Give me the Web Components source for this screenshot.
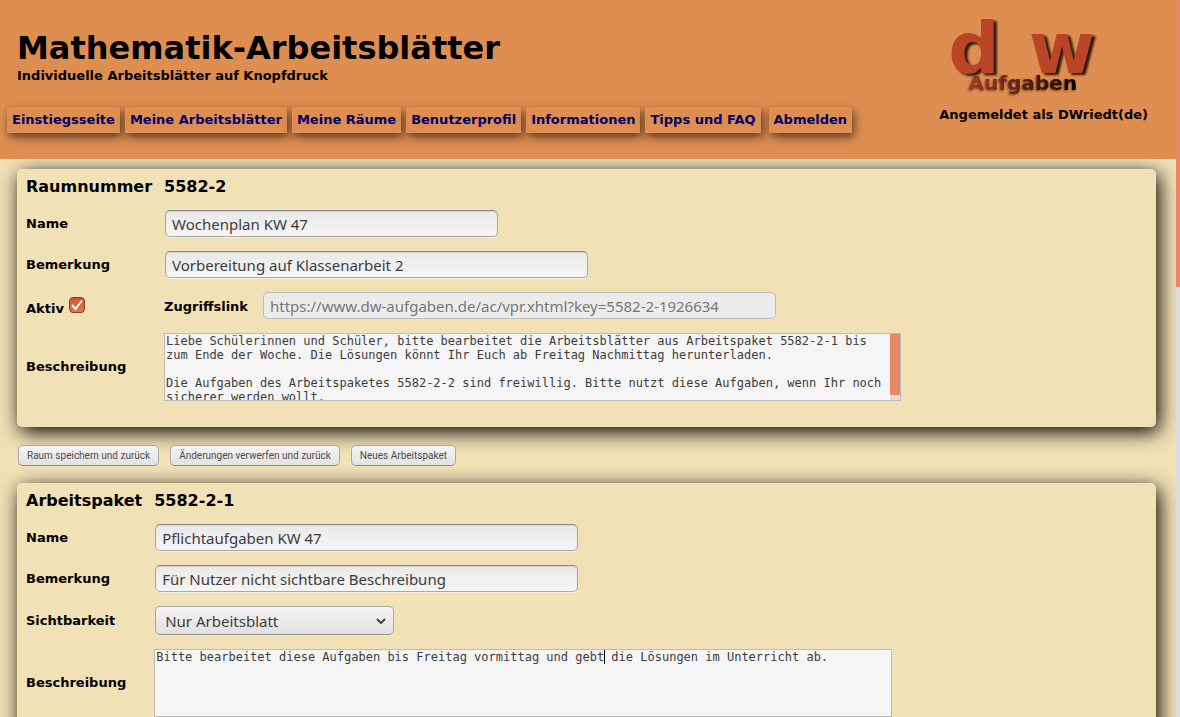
<!DOCTYPE html>
<html lang="de">
<head>
<meta charset="utf-8">
<meta name="viewport" content="width=device-width, initial-scale=1">
<title>Mathematik-Arbeitsblätter</title>
<style>
body {
	margin: 0;
	background-color: #f0e1b6;
	font-family: "DejaVu Sans", Verdana, sans-serif;
	font-size: 13px;
	font-weight: 700;
	line-height: 16px;
	color: black;
	--orange: #de8e51;
	--sand: #f0e1b6;
	--bar: #e58964;
	--ui-font: "Noto Sans", "Open Sans", sans-serif;
}
</style>
</head>
<body>

<page-frame>
	<page-header slot="header" user="DWriedt(de)">
		<nav-link href="#start">Einstiegsseite</nav-link>
		<nav-link href="#blaetter">Meine Arbeitsblätter</nav-link>
		<nav-link href="#raeume">Meine Räume</nav-link>
		<nav-link href="#profil">Benutzerprofil</nav-link>
		<nav-link href="#info">Informationen</nav-link>
		<nav-link href="#faq">Tipps und FAQ</nav-link>
		<nav-link href="#abmelden" apart>Abmelden</nav-link>
	</page-header>

	<form-panel label="Raumnummer" number="5582-2">
		<text-field label="Name" value="Wochenplan KW 47" size="small"></text-field>
		<text-field label="Bemerkung" value="Vorbereitung auf Klassenarbeit 2"></text-field>
		<access-field link="https://www.dw-aufgaben.de/ac/vpr.xhtml?key=5582-2-1926634"></access-field>
		<area-field label="Beschreibung" scroll>Liebe Schülerinnen und Schüler, bitte bearbeitet die Arbeitsblätter aus Arbeitspaket 5582-2-1 bis zum Ende der Woche. Die Lösungen könnt Ihr Euch ab Freitag Nachmittag herunterladen.

Die Aufgaben des Arbeitspaketes 5582-2-2 sind freiwillig. Bitte nutzt diese Aufgaben, wenn Ihr noch sicherer werden wollt.</area-field>
	</form-panel>

	<button-bar>
		<push-button>Raum speichern und zurück</push-button>
		<push-button>Änderungen verwerfen und zurück</push-button>
		<push-button>Neues Arbeitspaket</push-button>
	</button-bar>

	<form-panel label="Arbeitspaket" number="5582-2-1">
		<text-field label="Name" value="Pflichtaufgaben KW 47"></text-field>
		<text-field label="Bemerkung" value="Für Nutzer nicht sichtbare Beschreibung"></text-field>
		<select-field label="Sichtbarkeit" options="Nur Arbeitsblatt"></select-field>
		<area-field label="Beschreibung" caret="62">Bitte bearbeitet diese Aufgaben bis Freitag vormittag und gebt die Lösungen im Unterricht ab.</area-field>
	</form-panel>
</page-frame>

<script>
//Shared look of the form controls
const controlStyle = `
:host { display: contents; }
* { box-sizing: border-box; }
label { align-self: center; }
input[type=text] {
	display: block;
	width: 423px;
	max-width: 100%;
	height: 27px;
	margin: 0 0 0 1px;
	padding: 0 6px;
	border: 1px solid #a9a9a9;
	border-top-color: #8a8a8a;
	border-radius: 5px;
	background: linear-gradient(#e9e9e9, #f5f5f5);
	box-shadow: inset 0 1px 1px #d2d2d2, 0 1px 0 #f8f0da;
	color: #3c3c3c;
	font: 400 15px/20px var(--ui-font);
}
input.small { width: 333px; }
input:disabled {
	background: #ebebeb;
	border-color: #bdbdbd;
	box-shadow: none;
	color: #777;
}
`;

class BaseElement extends HTMLElement {

	constructor() {
		super();
		this.attachShadow({ mode: "open" });
	}

	connectedCallback() {
		this.shadowRoot.innerHTML = this.render();
	}

	attr(name) {
		return this.getAttribute(name) || "";
	}
}

//Scrolling page with its slim scroll rail
class PageFrame extends BaseElement {
	render() {
		return `
<style>
:host { display: grid; grid-template-columns: minmax(0, 1fr) 4px; height: 100vh; }
.scroller { overflow-y: auto; scrollbar-width: none; }
header { position: relative; z-index: 1; }
main { display: flex; flex-direction: column; padding: 10px 20px 20px 17px; }
.rail { background: #dcdcdc; }
.thumb { height: 40%; background: var(--bar); }
</style>
<div class="scroller">
	<header><slot name="header"></slot></header>
	<main><slot></slot></main>
</div>
<div class="rail"><div class="thumb"></div></div>`;
	}
}

class PageHeader extends BaseElement {
	render() {
		return `
<style>
:host { display: flex; justify-content: space-between; background: var(--orange); }
.left { padding: 28px 0 26px 7px; }
h1 { margin: 0 10px; font-size: 32px; line-height: 40px; }
p { margin: 0 10px; }
nav { display: flex; flex-wrap: wrap; gap: 5px; margin-top: 23px; }
.right { display: flex; flex-direction: column; align-items: flex-end; gap: 13px; padding: 18px 28px 0 0; }
</style>
<div class="left">
	<h1>Mathematik-Arbeitsblätter</h1>
	<p>Individuelle Arbeitsblätter auf Knopfdruck</p>
	<nav><slot></slot></nav>
</div>
<div class="right">
	<dw-logo></dw-logo>
	<span>Angemeldet als ${this.attr("user")}</span>
</div>`;
	}
}

class DwLogo extends BaseElement {
	render() {
		return `
<style>
:host { display: block; }
svg { display: block; }
text { font-family: "DejaVu Sans", sans-serif; font-weight: 700; text-anchor: middle; }
.big { font-size: 72px; fill: #b94426; filter: drop-shadow(3px 2px 1px #2a1408); }
.word { font-size: 20px; fill: url(#fade); filter: drop-shadow(-1px 1px 1px #7a3a1c); }
</style>
<svg width="248" height="76" viewBox="0 0 248 76" overflow="visible" role="img" aria-label="dw Aufgaben">
	<defs>
		<linearGradient id="fade" x1="0" x2="1">
			<stop offset="0" stop-color="#a33c22"/>
			<stop offset="0.8" stop-color="#2a1208"/>
			<stop offset="1" stop-color="#000"/>
		</linearGradient>
	</defs>
	<text class="word" x="123" y="72">Aufgaben</text>
	<text class="big" x="74" y="55">d</text>
	<text class="big" x="162" y="55">w</text>
</svg>`;
	}
}

class NavLink extends BaseElement {
	render() {
		return `
<style>
:host { display: block; }
:host([apart]) { margin-left: 3px; }
a {
	display: block;
	padding: 5px;
	background: var(--orange);
	box-shadow: 2px 4px 10px rgba(0, 0, 0, 0.6);
	color: #000066;
	text-decoration: none;
}
</style>
<a href="${this.attr("href")}"><slot></slot></a>`;
	}
}

//The fields lay themselves out in the two columns of this grid
class FormPanel extends BaseElement {
	render() {
		return `
<style>
:host {
	display: grid;
	grid-template-columns: max-content minmax(0, 1fr);
	gap: 14px 12px;
	padding: 9px 9px 26px;
	border-radius: 5px;
	background: var(--sand);
	box-shadow: 3px 5px 20px black;
}
h2 { margin: 0; font-size: 16px; line-height: 18px; }
</style>
<h2>${this.attr("label")}</h2>
<h2>${this.attr("number")}</h2>
<slot></slot>`;
	}
}

class TextField extends BaseElement {
	render() {
		return `
<style>${controlStyle}</style>
<label for="field">${this.attr("label")}</label>
<input id="field" type="text" class="${this.attr("size")}" value="${this.attr("value")}">`;
	}
}

class AccessField extends BaseElement {
	render() {
		return `
<style>
${controlStyle}
.active { display: flex; gap: 5px; padding-bottom: 2px; }
.active label { align-self: flex-end; }
.check { display: grid; align-self: flex-start; padding-top: 5px; }
.check > * { grid-area: 1 / 1; }
input[type=checkbox] {
	appearance: none;
	width: 16px;
	height: 16px;
	margin: 0;
	border: 1px solid #8f3d20;
	border-radius: 4px;
}
input:checked { background: linear-gradient(#cf5428, #e07850); }
svg { pointer-events: none; }
.link { display: flex; gap: 14px; }
.link label { padding-top: 2px; }
.link input { width: 513px; }
</style>
<div class="active">
	<label for="active">Aktiv</label>
	<span class="check">
		<input id="active" type="checkbox" checked>
		<svg width="16" height="16" viewBox="0 0 16 16" fill="none" stroke="#fff" stroke-width="2"><path d="M3 8l3.5 4L13 3.5"/></svg>
	</span>
</div>
<div class="link">
	<label for="link">Zugriffslink</label>
	<input id="link" type="text" value="${this.attr("link")}" disabled>
</div>`;
	}
}

class SelectField extends BaseElement {
	render() {
		let options = this.attr("options").split(",").map((o) => `<option>${o}</option>`).join("");
		return `
<style>
${controlStyle}
.box { display: grid; align-items: center; width: 239px; margin-left: 1px; }
.box > * { grid-area: 1 / 1; }
select {
	appearance: none;
	height: 29px;
	padding: 0 9px;
	border: 1px solid #a9a9a9;
	border-bottom-color: #8a8a8a;
	border-radius: 5px;
	background: linear-gradient(#f4f4f4, #e2e0e0);
	box-shadow: 0 1px 0 #f8f0da;
	color: #3c3c3c;
	font: 400 15px/20px var(--ui-font);
}
svg { justify-self: end; margin-right: 8px; pointer-events: none; }
</style>
<label for="field">${this.attr("label")}</label>
<div class="box">
	<select id="field">${options}</select>
	<svg width="10" height="6" viewBox="0 0 10 6" fill="none" stroke="#444" stroke-width="2"><path d="M1 1l4 4 4-4"/></svg>
</div>`;
	}
}

class AreaField extends BaseElement {
	render() {
		let rail = this.hasAttribute("scroll") ? `<div class="rail"><div class="thumb"></div></div>` : "";
		let caret = this.hasAttribute("caret") ? `<i class="caret"></i>` : "";
		return `
<style>
${controlStyle}
.box {
	position: relative;
	display: flex;
	width: 738px;
	max-width: 100%;
	height: 68px;
	border: 1px solid #bbb;
	background: #f5f5f5;
	font: 400 12px/14px "DejaVu Sans Mono", monospace;
}
:host([scroll]) .box { width: 737px; }
textarea {
	flex: 1;
	min-width: 0;
	padding: 0 1px;
	border: 0;
	outline: 0;
	background: none;
	resize: none;
	scrollbar-width: none;
	color: #3c3c3c;
	font: inherit;
}
.rail { width: 10px; background: #dcdcdc; }
.thumb { height: 92%; background: var(--bar); border-radius: 1px; }
.caret {
	position: absolute;
	top: 0;
	left: calc(${this.attr("caret") || 0}ch + 1px);
	width: 1px;
	height: 14px;
	background: #000;
}
</style>
<label for="field">${this.attr("label")}</label>
<div class="box">
	<textarea id="field">${this.textContent}</textarea>
	${rail}${caret}
</div>`;
	}
}

class ButtonBar extends BaseElement {
	render() {
		return `
<style>
:host { display: flex; flex-wrap: wrap; gap: 11px; padding: 18px 1px 17px; position: relative; }
</style>
<slot></slot>`;
	}
}

class PushButton extends BaseElement {
	render() {
		return `
<style>
button {
	display: block;
	height: 21px;
	padding: 0 8px;
	border: 1px solid #a9a9a9;
	border-bottom-color: #8a8a8a;
	border-radius: 5px;
	background: linear-gradient(#f4f4f4, #e2e2e2);
	color: #4c4c4c;
	font: 400 10px/16px Roboto, sans-serif;
}
</style>
<button type="button"><slot></slot></button>`;
	}
}

//Define custom html elements
customElements.define("page-frame", PageFrame);
customElements.define("page-header", PageHeader);
customElements.define("dw-logo", DwLogo);
customElements.define("nav-link", NavLink);
customElements.define("form-panel", FormPanel);
customElements.define("text-field", TextField);
customElements.define("access-field", AccessField);
customElements.define("select-field", SelectField);
customElements.define("area-field", AreaField);
customElements.define("button-bar", ButtonBar);
customElements.define("push-button", PushButton);
</script>
</body>
</html>
